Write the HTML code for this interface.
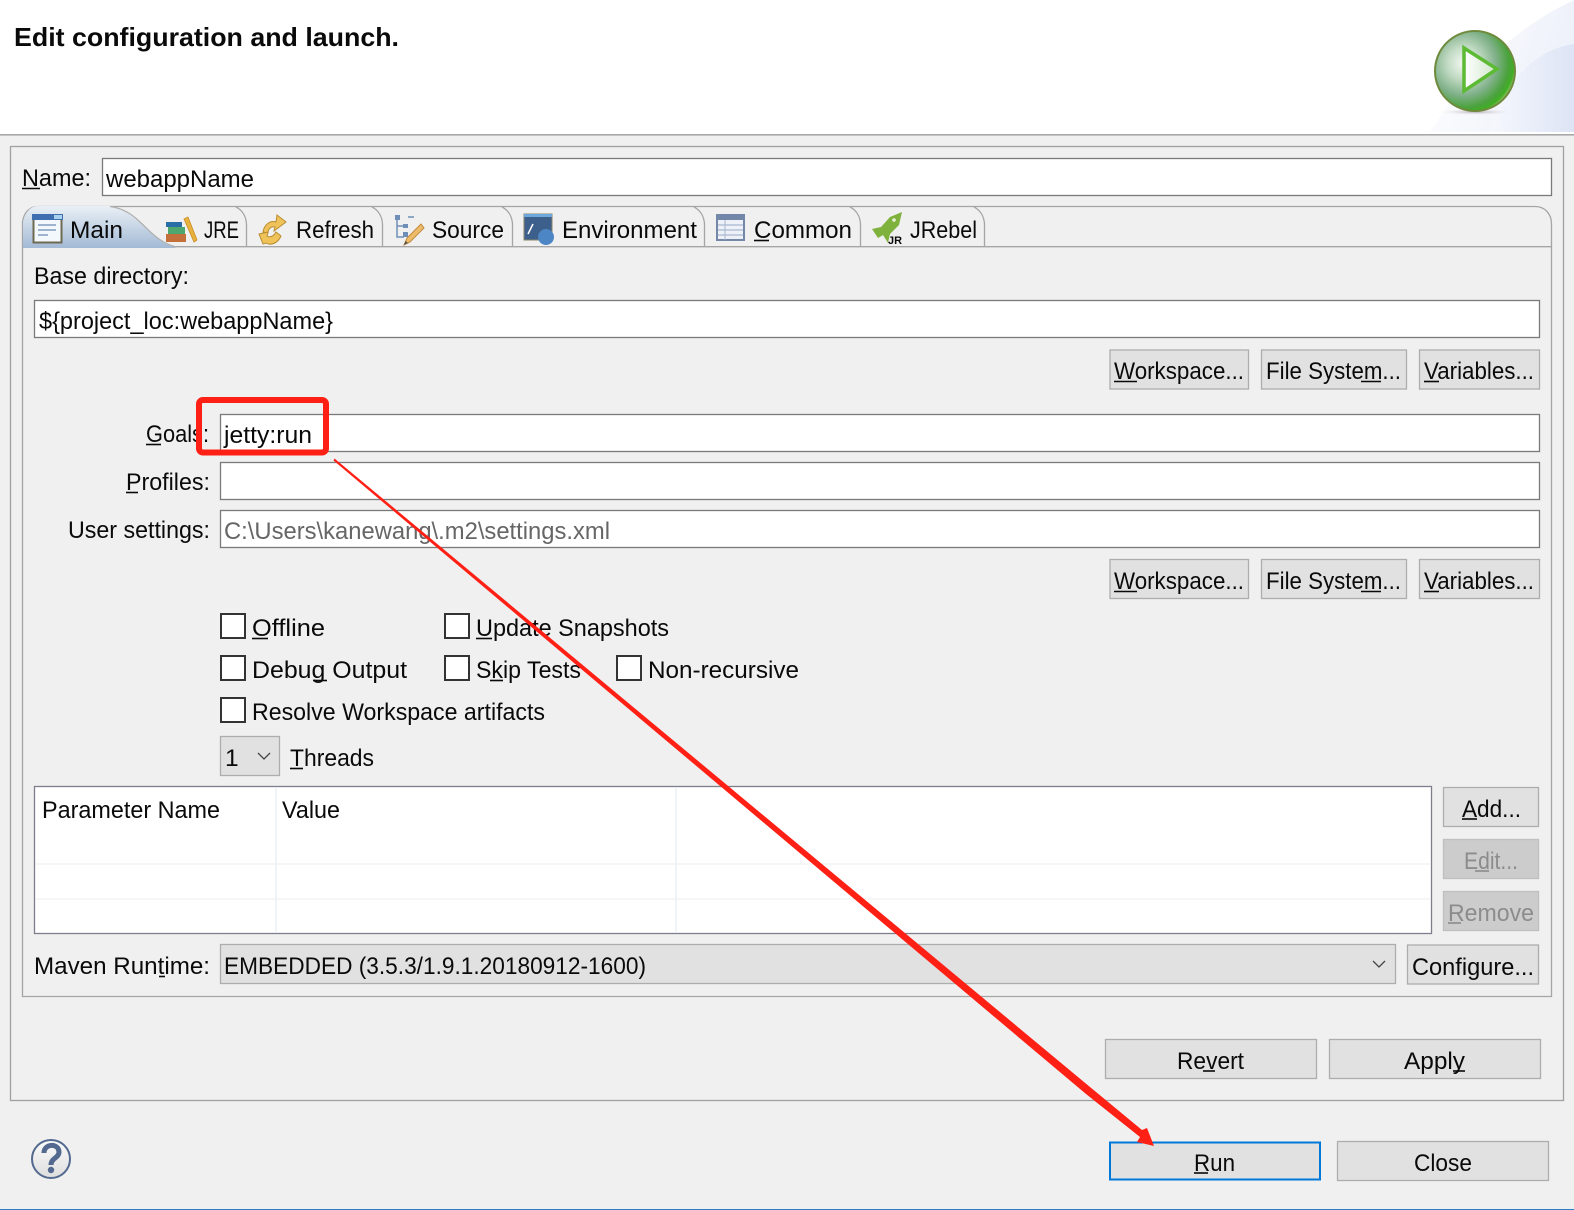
<!DOCTYPE html>
<html><head><meta charset="utf-8"><title>Edit configuration</title>
<style>
html,body{margin:0;padding:0;background:#f0f0f0;width:1574px;height:1210px;overflow:hidden}
svg{display:block}
text{font-family:"Liberation Sans",sans-serif;font-size:24.5px;fill:#0a0a0a}
.f{fill:#fff;stroke:#7a7a7a;stroke-width:1.3}
.b{fill:#e1e1e1;stroke:#adadad;stroke-width:1.3}
.d{fill:#cccccc;stroke:#bfbfbf;stroke-width:1.3}
.c{fill:#fff;stroke:#333;stroke-width:2}
.u{stroke:#0a0a0a;stroke-width:1.6}
.t{fill:none;stroke:#a5a5a5;stroke-width:1.3}
</style></head><body>
<svg width="1574" height="1210" viewBox="0 0 1574 1210" xmlns="http://www.w3.org/2000/svg">
<defs>
<linearGradient id="hd" x1="0" y1="0" x2="1" y2="0.3"><stop offset="0" stop-color="#fff"/><stop offset="1" stop-color="#eef1fa"/></linearGradient>
<linearGradient id="hd2" x1="0" y1="0" x2="1" y2="0"><stop offset="0" stop-color="#f6f8fd"/><stop offset="1" stop-color="#dde4f5"/></linearGradient>
<linearGradient id="tab" x1="0" y1="0" x2="0" y2="1"><stop offset="0" stop-color="#eaf0f6"/><stop offset="1" stop-color="#a3bad5"/></linearGradient>
<radialGradient id="ball" cx="0.36" cy="0.4" r="0.66"><stop offset="0" stop-color="#f4f8f2"/><stop offset="0.3" stop-color="#c4dcc6"/><stop offset="0.62" stop-color="#7fb088"/><stop offset="0.85" stop-color="#4aa23c"/><stop offset="0.95" stop-color="#3fae22"/><stop offset="1" stop-color="#8cc060"/></radialGradient>
<radialGradient id="shad" cx="0.5" cy="0.5" r="0.5"><stop offset="0" stop-color="#b5aeb8"/><stop offset="1" stop-color="#fff" stop-opacity="0"/></radialGradient>
<linearGradient id="tri" x1="0" y1="0" x2="1" y2="0"><stop offset="0" stop-color="#fff"/><stop offset="1" stop-color="#cfe6cb"/></linearGradient>
<linearGradient id="help" x1="0" y1="0" x2="0" y2="1"><stop offset="0" stop-color="#fbfbfb"/><stop offset="1" stop-color="#dedede"/></linearGradient>
</defs>

<!-- header -->
<rect x="0" y="0" width="1574" height="134" fill="#fff"/>
<path d="M1430 132C1470 70 1520 25 1574 0V132Z" fill="url(#hd)"/>
<path d="M1490 132C1505 80 1535 50 1574 44V132Z" fill="url(#hd2)"/>
<rect x="0" y="134" width="1574" height="1.6" fill="#a8a8a8"/>
<text x="14" y="46" font-weight="bold" style="font-weight:bold;font-size:26px" textLength="385" lengthAdjust="spacingAndGlyphs">Edit configuration and launch.</text>
<ellipse cx="1476" cy="112" rx="42" ry="3.5" fill="url(#shad)"/>
<circle cx="1475" cy="71" r="40" fill="url(#ball)" stroke="#6f8a3c" stroke-width="2"/>
<path d="M1464 48L1497 69L1464 91Z" fill="url(#tri)" stroke="#5cba33" stroke-width="3.5"/>

<!-- main panel -->
<rect x="10.5" y="146.5" width="1553" height="954" fill="#f0f0f0" stroke="#a0a0a0" stroke-width="1.3"/>

<text x="22" y="186" textLength="69" lengthAdjust="spacingAndGlyphs">Name:</text>
<line class="u" x1="22" y1="188.5" x2="40" y2="188.5"/>
<rect class="f" x="102.5" y="158.5" width="1449" height="37"/>
<text x="106" y="187" textLength="148" lengthAdjust="spacingAndGlyphs">webappName</text>

<!-- tab folder -->
<path class="t" d="M22.5 996.5V222C24 212 30 206.5 38 206.5H1535C1545 206.5 1551.5 214 1551.5 224V996.5Z" style="fill:#f0f0f0"/>
<line x1="22" y1="246.7" x2="1551" y2="246.7" stroke="#a5a5a5" stroke-width="1.3"/>
<path d="M23 247V222C25 212 31 206 38 206H110C122 208 132 214 140 222C150 231 158 242 176 248H23Z" fill="url(#tab)"/>
<path d="M110 206.5C122 208 132 214 140 222C150 231 158 242 176 247" fill="none" stroke="#b0b0b0" stroke-width="1.3"/>
<path class="t" d="M236 207C242 210 246 216 246.5 224V246"/>
<path class="t" d="M372 207C378 210 382 216 382.5 224V246"/>
<path class="t" d="M502 207C508 210 512 216 512.5 224V246"/>
<path class="t" d="M694 207C700 210 704 216 704.5 224V246"/>
<path class="t" d="M850 207C856 210 860 216 860.5 224V246"/>
<path class="t" d="M974 207C980 210 984 216 984.5 224V246"/>

<!-- Main tab icon -->
<rect x="33.5" y="215.5" width="28" height="27" fill="#f3f8fc" stroke="#6e6a52" stroke-width="2"/>
<rect x="32" y="214" width="31" height="6" fill="#3f6fb0"/><rect x="54" y="215" width="8" height="4" fill="#a9d0ec"/>
<path d="M38 225H56M38 230H56M38 235H48" stroke="#9db3d0" stroke-width="2"/>
<text x="70" y="238" textLength="53" lengthAdjust="spacingAndGlyphs">Main</text>

<!-- JRE icon -->
<rect x="166" y="222" width="16" height="5" fill="#2a6ea8"/>
<rect x="168" y="227" width="17" height="7" fill="#4da76f"/>
<rect x="166" y="234" width="20" height="8" fill="#c4703b"/>
<path d="M184 219L188 217L197 240L194 242Z" fill="#e8b23f" stroke="#c98a20" stroke-width=".8"/>
<text x="204" y="238" textLength="35" lengthAdjust="spacingAndGlyphs">JRE</text>

<!-- Refresh icon -->
<path d="M263 232C264 225 270 220 276 222L277 215L286 222L274 231L275 227C271 226 268 229 268 233Z" fill="#efc25a" stroke="#b88d30" stroke-width="1"/>
<path d="M259 234L268 232L267 236C270 238 274 236 276 232L281 236C278 243 271 246 266 243L263 244Z" fill="#efc25a" stroke="#b88d30" stroke-width="1"/>
<text x="296" y="238" textLength="78" lengthAdjust="spacingAndGlyphs">Refresh</text>

<!-- Source icon -->
<path d="M397 220V237H404M397 226H404" fill="none" stroke="#6f8fb8" stroke-width="1.5"/>
<rect x="395" y="215" width="5" height="5" fill="#6f8fb8"/><rect x="403" y="224" width="5" height="4" fill="#6f8fb8"/><rect x="403" y="232" width="5" height="5" fill="#6f8fb8"/><path d="M408 217H414" stroke="#6f8fb8" stroke-width="1.5"/>
<path d="M404 245L407 238L421 224L424 228L410 242Z" fill="#eebb6a" stroke="#c08a3c" stroke-width="1"/>
<path d="M404 245L405.5 241L408 243Z" fill="#555"/>
<text x="432" y="238" textLength="72" lengthAdjust="spacingAndGlyphs">Source</text>

<!-- Environment icon -->
<rect x="524" y="214" width="28" height="26" fill="#3d5f8c" stroke="#8a8468" stroke-width="1"/>
<rect x="524" y="214" width="28" height="3" fill="#6ea8dc"/>
<path d="M528 234L533 224" stroke="#fff" stroke-width="1.5"/>
<circle cx="546" cy="237" r="8" fill="#4d86c4"/>
<text x="562" y="238" textLength="135" lengthAdjust="spacingAndGlyphs">Environment</text>

<!-- Common icon -->
<rect x="717" y="215" width="27" height="25" fill="#eef1f7" stroke="#7387a8" stroke-width="2"/>
<rect x="717" y="215" width="27" height="5" fill="#7387a8"/>
<path d="M718 225H743M718 230H743M718 235H743" stroke="#c3cde0" stroke-width="2"/>
<path d="M725 220V240" stroke="#a8b6cf" stroke-width="1"/>
<text x="754" y="238" textLength="98" lengthAdjust="spacingAndGlyphs">Common</text>
<line class="u" x1="754" y1="240.5" x2="769" y2="240.5"/>

<!-- JRebel icon -->
<path d="M872 229L881 227L890 217L902 212L899 225L890 234L888 243L883 235L878 238Z" fill="#7fb23c"/>
<circle cx="894" cy="220" r="1.8" fill="#e8f2d8"/>
<text x="888" y="244" style="font-size:11px;font-weight:bold" textLength="14" lengthAdjust="spacingAndGlyphs">JR</text>
<text x="910" y="238" textLength="67" lengthAdjust="spacingAndGlyphs">JRebel</text>

<!-- Base dir -->
<text x="34" y="284" textLength="155" lengthAdjust="spacingAndGlyphs">Base directory:</text>
<rect class="f" x="34.5" y="300.5" width="1505" height="37"/>
<text x="39" y="329" textLength="294" lengthAdjust="spacingAndGlyphs">${project_loc:webappName}</text>

<rect class="b" x="1110" y="350" width="138.5" height="39"/>
<rect class="b" x="1261.5" y="350" width="145" height="39"/>
<rect class="b" x="1419.5" y="350" width="120" height="39"/>
<text x="1114" y="379" textLength="130" lengthAdjust="spacingAndGlyphs">Workspace...</text>
<line class="u" x1="1114" y1="381.5" x2="1137" y2="381.5"/>
<text x="1266" y="379" textLength="135" lengthAdjust="spacingAndGlyphs">File System...</text>
<line class="u" x1="1361" y1="381.5" x2="1381" y2="381.5"/>
<text x="1424" y="379" textLength="110" lengthAdjust="spacingAndGlyphs">Variables...</text>
<line class="u" x1="1424" y1="381.5" x2="1439" y2="381.5"/>

<!-- Goals etc -->
<text x="146" y="442" textLength="63" lengthAdjust="spacingAndGlyphs">Goals:</text>
<line class="u" x1="146" y1="444.5" x2="161" y2="444.5"/>
<rect class="f" x="220.5" y="414.5" width="1319" height="37"/>
<text x="224" y="443" textLength="88" lengthAdjust="spacingAndGlyphs">jetty:run</text>
<text x="126" y="490" textLength="84" lengthAdjust="spacingAndGlyphs">Profiles:</text>
<line class="u" x1="126" y1="492.5" x2="138" y2="492.5"/>
<rect class="f" x="220.5" y="462.5" width="1319" height="37"/>
<text x="68" y="538" textLength="142" lengthAdjust="spacingAndGlyphs">User settings:</text>
<rect class="f" x="220.5" y="510.5" width="1319" height="37"/>
<text x="224" y="539" textLength="386" lengthAdjust="spacingAndGlyphs" style="fill:#666">C:\Users\kanewang\.m2\settings.xml</text>

<rect class="b" x="1110" y="559.5" width="138.5" height="39"/>
<rect class="b" x="1261.5" y="559.5" width="145" height="39"/>
<rect class="b" x="1419.5" y="559.5" width="120" height="39"/>
<text x="1114" y="589" textLength="130" lengthAdjust="spacingAndGlyphs">Workspace...</text>
<line class="u" x1="1114" y1="591.5" x2="1137" y2="591.5"/>
<text x="1266" y="589" textLength="135" lengthAdjust="spacingAndGlyphs">File System...</text>
<line class="u" x1="1361" y1="591.5" x2="1381" y2="591.5"/>
<text x="1424" y="589" textLength="110" lengthAdjust="spacingAndGlyphs">Variables...</text>
<line class="u" x1="1424" y1="591.5" x2="1439" y2="591.5"/>

<!-- checkboxes -->
<rect class="c" x="221" y="614" width="24" height="24"/>
<rect class="c" x="445" y="614" width="24" height="24"/>
<rect class="c" x="221" y="656" width="24" height="24"/>
<rect class="c" x="445" y="656" width="24" height="24"/>
<rect class="c" x="617" y="656" width="24" height="24"/>
<rect class="c" x="221" y="698" width="24" height="24"/>
<text x="252" y="636" textLength="73" lengthAdjust="spacingAndGlyphs">Offline</text>
<line class="u" x1="252" y1="638.5" x2="268" y2="638.5"/>
<text x="476" y="636" textLength="193" lengthAdjust="spacingAndGlyphs">Update Snapshots</text>
<line class="u" x1="476" y1="638.5" x2="492" y2="638.5"/>
<text x="252" y="678" textLength="155" lengthAdjust="spacingAndGlyphs">Debug Output</text>
<line class="u" x1="313" y1="680.5" x2="327" y2="680.5"/>
<text x="476" y="678" textLength="105" lengthAdjust="spacingAndGlyphs">Skip Tests</text>
<line class="u" x1="490" y1="680.5" x2="503" y2="680.5"/>
<text x="648" y="678" textLength="151" lengthAdjust="spacingAndGlyphs">Non-recursive</text>
<text x="252" y="720" textLength="293" lengthAdjust="spacingAndGlyphs">Resolve Workspace artifacts</text>

<!-- threads -->
<rect class="b" x="220.5" y="736.5" width="59" height="39"/>
<text x="225" y="766">1</text>
<path d="M258 753L264 759L270 753" fill="none" stroke="#444" stroke-width="1.3"/>
<text x="290" y="766" textLength="84" lengthAdjust="spacingAndGlyphs">Threads</text>
<line class="u" x1="290" y1="768.5" x2="303" y2="768.5"/>

<!-- table -->
<rect x="34.5" y="786.5" width="1397" height="147" fill="#fff" stroke="#7f7f8c" stroke-width="1.3"/>
<path d="M276 788V932M676 788V932" stroke="#e6eef5" stroke-width="1.3"/>
<path d="M36 864H1431M36 899H1431" stroke="#f0f0f0" stroke-width="1.3"/>
<text x="42" y="818" textLength="178" lengthAdjust="spacingAndGlyphs">Parameter Name</text>
<text x="282" y="818" textLength="58" lengthAdjust="spacingAndGlyphs">Value</text>

<rect class="b" x="1443.5" y="787.5" width="95" height="39"/>
<text x="1462" y="817" textLength="59" lengthAdjust="spacingAndGlyphs">Add...</text>
<line class="u" x1="1462" y1="819" x2="1477" y2="819"/>
<rect class="d" x="1443.5" y="839.5" width="95" height="39"/>
<text x="1464" y="869" textLength="54" lengthAdjust="spacingAndGlyphs" style="fill:#8c8c8c">Edit...</text>
<line x1="1475" y1="871" x2="1489" y2="871" stroke="#8c8c8c" stroke-width="1.6"/>
<rect class="d" x="1443.5" y="891.5" width="95" height="39"/>
<text x="1448" y="921" textLength="86" lengthAdjust="spacingAndGlyphs" style="fill:#8c8c8c">Remove</text>
<line x1="1448" y1="923" x2="1461" y2="923" stroke="#8c8c8c" stroke-width="1.6"/>

<!-- maven runtime -->
<text x="34" y="974" textLength="176" lengthAdjust="spacingAndGlyphs">Maven Runtime:</text>
<line class="u" x1="159" y1="976.5" x2="165" y2="976.5"/>
<rect class="b" x="220.5" y="944.5" width="1175" height="39"/>
<text x="224" y="974" textLength="422" lengthAdjust="spacingAndGlyphs">EMBEDDED (3.5.3/1.9.1.20180912-1600)</text>
<path d="M1373 961L1379 967L1385 961" fill="none" stroke="#444" stroke-width="1.3"/>
<rect class="b" x="1407.5" y="945" width="131" height="39"/>
<text x="1412" y="975" textLength="122" lengthAdjust="spacingAndGlyphs">Configure...</text>

<!-- revert / apply -->
<rect class="b" x="1105.5" y="1039.5" width="211" height="39"/>
<text x="1177" y="1069" textLength="67" lengthAdjust="spacingAndGlyphs">Revert</text>
<line class="u" x1="1203" y1="1071" x2="1215" y2="1071"/>
<rect class="b" x="1329.5" y="1039.5" width="211" height="39"/>
<text x="1404" y="1069" textLength="61" lengthAdjust="spacingAndGlyphs">Apply</text>
<line class="u" x1="1453" y1="1071" x2="1465" y2="1071"/>

<!-- bottom -->
<circle cx="51" cy="1159" r="19" fill="url(#help)" stroke="#53698f" stroke-width="2"/>
<path d="M44 1153C44 1143 59 1143 59 1152C59 1158 51 1158 51 1165" fill="none" stroke="#53698f" stroke-width="5"/>
<circle cx="51" cy="1170" r="3.2" fill="#53698f"/>

<rect x="1110" y="1142.5" width="210" height="37" fill="#e1e1e1" stroke="#0078d7" stroke-width="2"/>
<text x="1194" y="1171" textLength="41" lengthAdjust="spacingAndGlyphs">Run</text>
<line class="u" x1="1194" y1="1173" x2="1208" y2="1173"/>
<rect class="b" x="1337.5" y="1141.5" width="211" height="39"/>
<text x="1414" y="1171" textLength="58" lengthAdjust="spacingAndGlyphs">Close</text>
<rect x="0" y="1209" width="1574" height="1" fill="#2f7fc4"/>

<!-- annotations -->
<rect x="199" y="400" width="127" height="52.500" rx="4" fill="none" stroke="#ff2015" stroke-width="6"/>
<path d="M334.500 458.500L1090 1087L1142 1130L1147 1128L1154 1146L1137 1142L1140 1137L1086 1094L333.500 460.500Z" fill="#ff2015"/>
</svg>
</body></html>
